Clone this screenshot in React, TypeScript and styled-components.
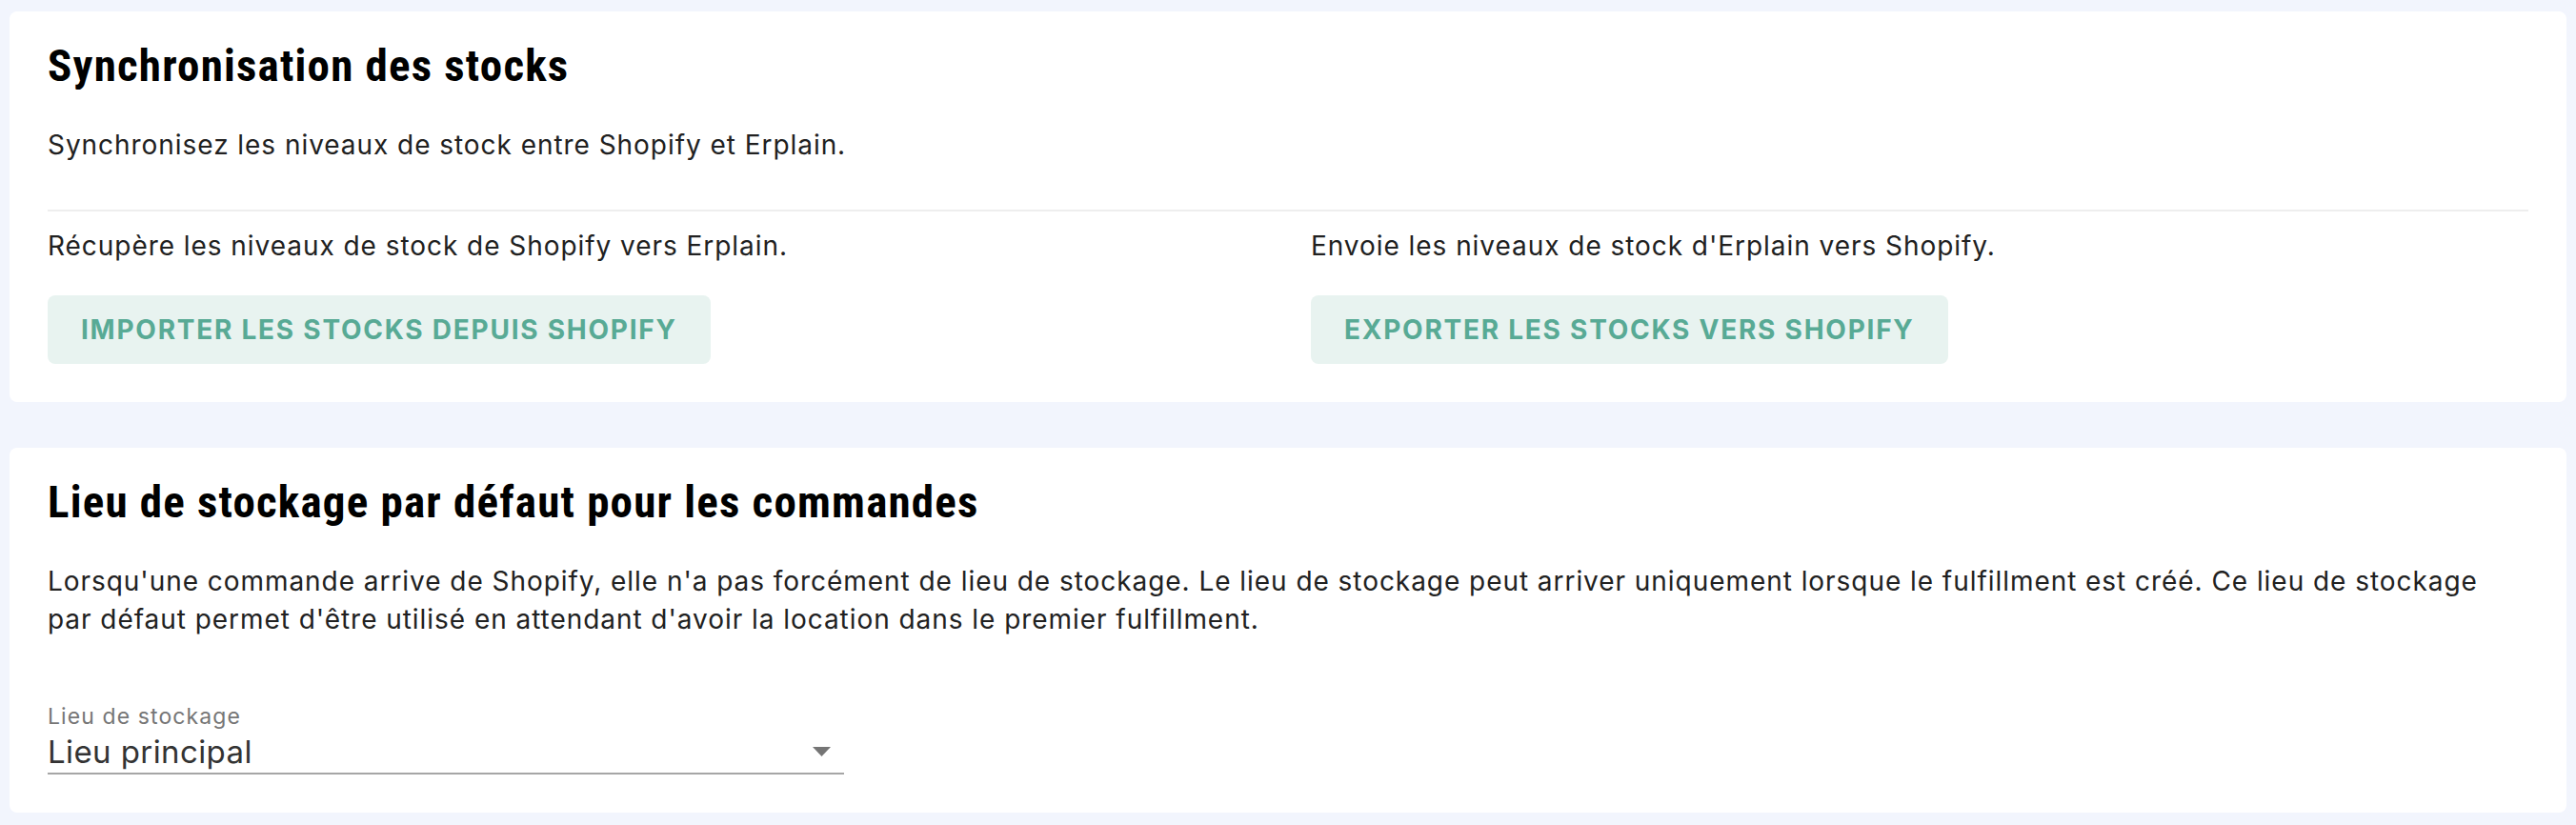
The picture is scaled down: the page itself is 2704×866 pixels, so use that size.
import React from 'react';
import styled, { createGlobalStyle } from 'styled-components';

const GlobalStyle = createGlobalStyle`
  html, body {
    margin: 0;
    padding: 0;
    background: #f2f5fd;
  }
  body {
    font-family: 'Inter', 'Open Sans', sans-serif;
    color: #212121;
  }
  * {
    box-sizing: border-box;
  }
`;

const Page = styled.div`
  display: flex;
  flex-direction: column;
  gap: 48px;
  padding: 12px 10px 13px;
`;

const Card = styled.section`
  background: #ffffff;
  border-radius: 8px;
  padding: 30px 40px 40px;
`;

const Title = styled.h2`
  margin: 0;
  font-family: 'Roboto Condensed', 'Liberation Sans Narrow', 'Roboto', sans-serif;
  font-size: 47px;
  line-height: 54px;
  font-weight: 700;
  letter-spacing: 1.2px;
  color: #000;
`;

const Text = styled.p<{ $top?: number }>`
  margin: ${(p) => p.$top ?? 0}px 0 0;
  font-size: 28px;
  line-height: 40px;
  font-weight: 400;
  letter-spacing: 0.95px;
  color: #212121;
`;

const Divider = styled.hr`
  margin: 48px 0 0;
  border: 0;
  height: 2px;
  background: #eeeeee;
`;

const Columns = styled.div`
  display: grid;
  grid-template-columns: 1fr 1fr;
  column-gap: 48px;
`;

const Column = styled.div`
  display: flex;
  flex-direction: column;
  align-items: flex-start;
  gap: 32px;
  padding-top: 16px;
`;

const ActionButton = styled.button`
  height: 72px;
  padding: 0 35px;
  border: 0;
  border-radius: 8px;
  background: #e8f3f0;
  color: #58aa95;
  font-family: 'Inter', sans-serif;
  font-size: 28px;
  font-weight: 700;
  letter-spacing: 1.75px;
  text-transform: uppercase;
  cursor: pointer;
`;

const Field = styled.label`
  display: flex;
  flex-direction: column;
  width: 836px;
  margin-top: 68px;
`;

const FieldLabel = styled.span`
  font-size: 23px;
  line-height: 28px;
  letter-spacing: 1.1px;
  color: #767676;
`;

const SelectBox = styled.div`
  display: flex;
  align-items: center;
  justify-content: space-between;
  margin-top: 3px;
  padding: 0 14px 2px 0;
  border-bottom: 2px solid #a6a6a6;
`;

const SelectValue = styled.span`
  font-size: 33px;
  line-height: 40px;
  letter-spacing: 0.4px;
  color: #333333;
`;

const Caret = styled.svg`
  width: 19px;
  height: 10px;
  fill: #757575;
`;

export default function App() {
  return (
    <>
      <GlobalStyle />
      <Page>
        <Card>
          <Title>Synchronisation des stocks</Title>
          <Text $top={36}>Synchronisez les niveaux de stock entre Shopify et Erplain.</Text>
          <Divider />
          <Columns>
            <Column>
              <Text>Récupère les niveaux de stock de Shopify vers Erplain.</Text>
              <ActionButton>Importer les stocks depuis Shopify</ActionButton>
            </Column>
            <Column>
              <Text>Envoie les niveaux de stock d'Erplain vers Shopify.</Text>
              <ActionButton>Exporter les stocks vers Shopify</ActionButton>
            </Column>
          </Columns>
        </Card>
        <Card>
          <Title>Lieu de stockage par défaut pour les commandes</Title>
          <Text $top={36}>
            Lorsqu'une commande arrive de Shopify, elle n'a pas forcément de lieu de stockage. Le lieu de
            stockage peut arriver uniquement lorsque le fulfillment est créé. Ce lieu de stockage par défaut
            permet d'être utilisé en attendant d'avoir la location dans le premier fulfillment.
          </Text>
          <Field>
            <FieldLabel>Lieu de stockage</FieldLabel>
            <SelectBox>
              <SelectValue>Lieu principal</SelectValue>
              <Caret viewBox="0 0 19 10">
                <path d="M0 0h19L9.5 10z" />
              </Caret>
            </SelectBox>
          </Field>
        </Card>
      </Page>
    </>
  );
}
